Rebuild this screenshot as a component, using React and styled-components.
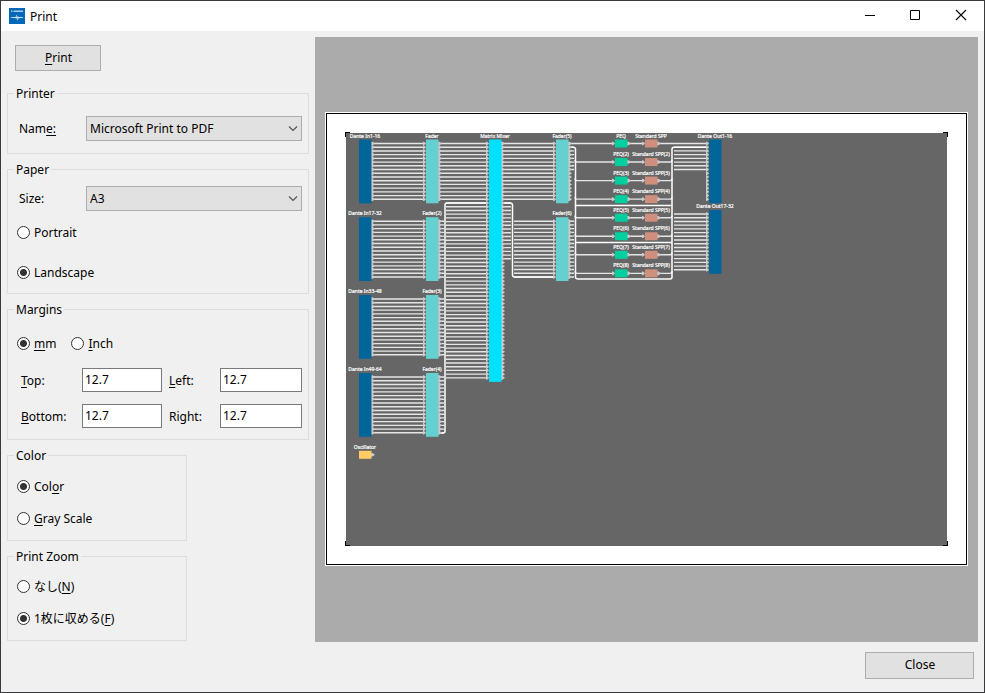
import React from "react";
import styled, { createGlobalStyle } from "styled-components";

const GlobalStyle = createGlobalStyle`
  * {
    box-sizing: border-box;
  }

  body {
    margin: 0;
    background: #f0f0f0;
  }

  body, button, input, select {
    font-family: "Noto Sans", "Noto Sans CJK JP", sans-serif;
    font-size: 12px;
    line-height: 17px;
    color: #000000;
  }
`;

const Window = styled.div`
  min-height: 100vh;
  display: flex;
  flex-flow: column nowrap;
  border: 1px solid #3a393b;
  background: #f0f0f0;
`;
const TitleBar = styled.header`
  height: 30px;
  padding-left: 8px;
  display: flex;
  align-items: center;
  background: #ffffff;
`;
const Title = styled.h1`
  flex: 1;
  margin: 0 0 0 5px;
  font-size: 12px;
  font-weight: 400;
`;
const WindowButton = styled.button`
  width: 46px;
  height: 30px;
  padding: 0 0 2px;
  display: flex;
  align-items: center;
  justify-content: center;
  border: none;
  background: transparent;
`;
const Body = styled.main`
  flex: 1;
  padding: 6px 6px 0;
  display: grid;
  grid-template-columns: 302px 1fr;
  column-gap: 6px;
`;
const Settings = styled.form`
  display: flex;
  flex-flow: column nowrap;
  align-items: flex-start;
  gap: 7px;
`;
const Button = styled.button`
  width: ${(props) => props.$width};
  height: ${(props) => props.$height};
  padding: 0 0 2px 1px;
  border: 1px solid #adadad;
  background: #e1e1e1;
`;
const PrintArea = styled.div`
  padding: 8px 8px 7px;
`;
const Group = styled.fieldset`
  width: ${(props) => props.$width || "100%"};
  min-width: 0;
  margin: 0;
  padding: ${(props) => props.$top} 6px ${(props) => props.$bottom};
  border: 1px solid #dcdcdc;
`;
const Legend = styled.legend`
  height: 17px;
  padding: 0 2px;
`;
const Field = styled.div`
  display: grid;
  grid-template-columns: 72px 1fr;
  align-items: center;
`;
const FieldLabel = styled.label`
  padding-left: 5px;
`;
const SelectBox = styled.div`
  position: relative;

  svg {
    position: absolute;
    top: 9px;
    right: 4px;
    pointer-events: none;
  }
`;
const Select = styled.select`
  width: 100%;
  height: 25px;
  padding: 0 20px 0 3px;
  display: block;
  appearance: none;
  border: 1px solid #adadad;
  border-radius: 0;
  background: #e1e1e1;
`;
const Options = styled.div`
  padding: ${(props) => props.$top || "0"} 3px 0;
  display: flex;
  flex-flow: ${(props) => (props.$row ? "row" : "column")} nowrap;
  gap: ${(props) => props.$gap};
`;
const OptionLabel = styled.label`
  height: 20px;
  display: flex;
  align-items: center;
  gap: 4px;
`;
const RadioInput = styled.input`
  width: 13px;
  height: 13px;
  margin: 0;
  appearance: none;
  border: 1px solid #333333;
  border-radius: 50%;
  background: #ffffff;

  &:checked {
    background: radial-gradient(circle, #333333 3px, #ffffff 4px);
  }
`;
const MarginGrid = styled.div`
  margin-top: 15px;
  display: grid;
  grid-template-columns: 68px 80px 58px 1fr;
  row-gap: 12px;
  align-items: center;
`;
const MarginLabel = styled.label`
  padding-left: 7px;
`;
const TextInput = styled.input`
  width: 100%;
  height: 24px;
  padding: 0 2px 1px;
  border: 1px solid #7a7a7a;
  background: #ffffff;
`;
const Key = styled.span`
  text-decoration: underline;
  text-decoration-thickness: 1px;
  text-underline-offset: 2px;
`;
const Preview = styled.section`
  padding: 0 10px;
  display: flex;
  align-items: center;
  background: #ababab;
`;
const Paper = styled.div`
  width: 100%;
  padding: 18px;
  border: 1px solid #000000;
  outline: 1px solid #ffffff;
  margin: 0 1px 1px;
  background: #ffffff;
`;
const Diagram = styled.svg`
  width: 100%;
  display: block;
`;
const Caption = styled.text`
  font-family: "Noto Sans", sans-serif;
  font-size: 5px;
  fill: #ffffff;
  stroke: #ffffff;
  stroke-width: 0.2px;
  text-anchor: middle;
`;
const Footer = styled.footer`
  padding: 10px 10px 13px;
  display: flex;
  justify-content: flex-end;
`;

const PITCH = 3.72;

const columns = {
  input: 359,
  fader: 426,
  mixer: 489,
  fader2: 556,
  peq: 615,
  spp: 645,
  output: 709,
};

const blocks = [
  { label: "Dante In1-16", x: columns.input, y: 139.5, outs: 16, color: "#006699" },
  { label: "Dante In17-32", x: columns.input, y: 217.2, outs: 16, color: "#006699" },
  { label: "Dante In33-48", x: columns.input, y: 295, outs: 16, color: "#006699" },
  { label: "Dante In49-64", x: columns.input, y: 373, outs: 16, color: "#006699" },
  { label: "Fader", x: columns.fader, y: 139.5, ins: 16, outs: 16, color: "#66cfcf" },
  { label: "Fader(2)", x: columns.fader, y: 217.2, ins: 16, outs: 16, color: "#66cfcf" },
  { label: "Fader(3)", x: columns.fader, y: 295, ins: 16, outs: 16, color: "#66cfcf" },
  { label: "Fader(4)", x: columns.fader, y: 373, ins: 16, outs: 16, color: "#66cfcf" },
  { label: "Matrix Mixer", x: columns.mixer, y: 139.5, ins: 64, outs: 64, color: "#00e1ff" },
  { label: "Fader(5)", x: columns.fader2, y: 139.5, ins: 16, outs: 16, color: "#66cfcf" },
  { label: "Fader(6)", x: columns.fader2, y: 217.2, ins: 16, outs: 16, color: "#66cfcf" },
  { label: "Dante Out1-16", x: columns.output, y: 139.5, ins: 16, color: "#006699" },
  { label: "Dante Out17-32", x: columns.output, y: 210, ins: 16, color: "#006699" },
  { label: "Oscillator", x: columns.input, y: 450.8, outs: 1, color: "#ffcc66" },
];

for (let i = 0; i < 8; i++) {
  const suffix = i ? `(${i + 1})` : "";
  const y = 139.5 + i * 18.55;
  blocks.push({ label: `PEQ${suffix}`, x: columns.peq, y, ins: 1, outs: 1, color: "#00cf9f" });
  blocks.push({ label: `Standard SPP${suffix}`, x: columns.spp, y, ins: 1, outs: 1, color: "#cf8f7f" });
}

const portY = (y, i) => y + 4 + i * PITCH;

// horizontal runs of wires between two columns
const runs = [
  [373, 424, 139.5, 16],
  [373, 424, 217.2, 16],
  [373, 424, 295, 16],
  [373, 424, 373, 16],
  [440, 487, 139.5, 16],
  [440, 444, 217.2, 16],
  [440, 444, 295, 16],
  [440, 444, 373, 16],
  [446, 487, 199, 48],
  [503, 554, 139.5, 16],
  [503, 511, 199, 16],
  [514, 554, 217.2, 16],
  [570, 613, 139.5, 1],
  [570, 574, 143.2, 7],
  [570, 574, 217.2, 16],
  [660, 707, 139.5, 1],
  [674, 707, 143.2, 7],
  [674, 707, 210, 16],
];

const wires = runs.flatMap(([from, to, y, count]) =>
  Array.from({ length: count }, (_, i) => `M${from} ${portY(y, i)}H${to}`)
);

for (let i = 0; i < 8; i++) {
  const y = 143.5 + i * 18.55;
  wires.push(`M629 ${y}H643`);
  if (i) {
    wires.push(`M575 ${y - 2}Q575 ${y} 577 ${y}H613M660 ${y}H670Q672 ${y} 672 ${y - 2}`);
  }
}

const trunks = [
  "M487 203H447Q445 203 445 205V431Q445 433 443 433H440",
  "M503 203H510Q512.5 203 512.5 205V275Q512.5 277 515 277H554",
  "M570 147.2H573Q575.5 147.2 575.5 149V277Q575.5 279 578 279H670Q672 279 672 277V149Q672 147.2 674 147.2H707",
  "M576 205.5H672",
  "M576 242.5H672",
];

const Block = ({ label, x, y, ins = 0, outs = 0, color }) => {
  const ports = Math.max(ins, outs);
  const height = ports === 1 ? 8 : (ports - 1) * PITCH + 8;
  const arrows = [];
  for (let i = 0; i < ins; i++) {
    arrows.push(`M${x - 3} ${portY(y, i) - 1.8}h1l2.2 1.8l-2.2 1.8h-1z`);
  }
  for (let i = 0; i < outs; i++) {
    arrows.push(`M${x + 12} ${portY(y, i) - 1.8}h1.6l2.4 1.8l-2.4 1.8h-1.6z`);
  }
  return (
    <g>
      <path d={arrows.join("")} fill="#cccccc" />
      <rect x={x} y={y} width="12.5" height={height} fill={color} />
      <Caption x={x + 6} y={y - 2}>
        {label}
      </Caption>
    </g>
  );
};

const AppIcon = () => (
  <svg width="16" height="16" viewBox="0 0 16 16" aria-hidden="true">
    <rect width="16" height="16" fill="#0068b7" />
    <path d="M2 2.5h1.5v1.5h-1.5zM4.5 2.5h9.5v1.5h-9.5z" fill="#a9cdea" />
    <path d="M2 9.5L6.5 9L7.5 6.5L8.5 8.5L14 9.5L9.5 10.5L8.5 13L7.5 10.5Z" fill="#8fc0e6" />
    <path d="M2 9.5H14" stroke="#d5e8f7" strokeWidth="0.8" />
  </svg>
);

const Dropdown = ({ id, value }) => (
  <SelectBox>
    <Select id={id} defaultValue={value}>
      <option>{value}</option>
    </Select>
    <svg width="10" height="7" viewBox="0 0 10 7" aria-hidden="true">
      <path d="M1 1.5L5 5.5L9 1.5" fill="none" stroke="#555555" strokeWidth="1.2" />
    </svg>
  </SelectBox>
);

const Radio = ({ name, checked, children }) => (
  <OptionLabel>
    <RadioInput type="radio" name={name} defaultChecked={checked} />
    <span>{children}</span>
  </OptionLabel>
);

const App = () => {
  return (
    <Window>
      <GlobalStyle />
      <TitleBar>
        <AppIcon />
        <Title>Print</Title>
        <WindowButton aria-label="Minimize">
          <svg width="12" height="12" viewBox="0 0 12 12">
            <path d="M2 6.5H12" stroke="#000000" />
          </svg>
        </WindowButton>
        <WindowButton aria-label="Maximize">
          <svg width="12" height="12" viewBox="0 0 12 12">
            <path d="M1.5 1.5H10.5V10.5H1.5Z" fill="none" stroke="#000000" />
          </svg>
        </WindowButton>
        <WindowButton aria-label="Close window">
          <svg width="12" height="12" viewBox="0 0 12 12">
            <path d="M1 1L11 11M11 1L1 11" stroke="#000000" strokeWidth="1.1" />
          </svg>
        </WindowButton>
      </TitleBar>
      <Body>
        <Settings>
          <PrintArea>
            <Button type="button" $width="86px" $height="26px">
              <Key>P</Key>rint
            </Button>
          </PrintArea>
          <Group $top="14px" $bottom="12px">
            <Legend>Printer</Legend>
            <Field>
              <FieldLabel htmlFor="printer">
                Nam<Key>e:</Key>
              </FieldLabel>
              <Dropdown id="printer" value="Microsoft Print to PDF" />
            </Field>
          </Group>
          <Group $top="8px" $bottom="11px">
            <Legend>Paper</Legend>
            <Field>
              <FieldLabel htmlFor="size">Size:</FieldLabel>
              <Dropdown id="size" value="A3" />
            </Field>
            <Options $top="11px" $gap="20px">
              <Radio name="orientation">Portrait</Radio>
              <Radio name="orientation" checked>
                Landscape
              </Radio>
            </Options>
          </Group>
          <Group $top="15px" $bottom="11px">
            <Legend>Margins</Legend>
            <Options $row $gap="15px">
              <Radio name="unit" checked>
                <Key>m</Key>m
              </Radio>
              <Radio name="unit">
                <Key>I</Key>nch
              </Radio>
            </Options>
            <MarginGrid>
              <MarginLabel htmlFor="top">
                <Key>T</Key>op:
              </MarginLabel>
              <TextInput id="top" defaultValue="12.7" />
              <MarginLabel htmlFor="left">
                <Key>L</Key>eft:
              </MarginLabel>
              <TextInput id="left" defaultValue="12.7" />
              <MarginLabel htmlFor="bottom">
                <Key>B</Key>ottom:
              </MarginLabel>
              <TextInput id="bottom" defaultValue="12.7" />
              <MarginLabel htmlFor="right">Right:</MarginLabel>
              <TextInput id="right" defaultValue="12.7" />
            </MarginGrid>
          </Group>
          <Group $width="180px" $top="12px" $bottom="12px">
            <Legend>Color</Legend>
            <Options $gap="12px">
              <Radio name="color" checked>
                Col<Key>o</Key>r
              </Radio>
              <Radio name="color">
                <Key>G</Key>ray Scale
              </Radio>
            </Options>
          </Group>
          <Group $width="180px" $top="11px" $bottom="12px">
            <Legend>Print Zoom</Legend>
            <Options $gap="12px">
              <Radio name="zoom">
                なし(<Key>N</Key>)
              </Radio>
              <Radio name="zoom" checked>
                1枚に収める(<Key>F</Key>)
              </Radio>
            </Options>
          </Group>
        </Settings>
        <Preview aria-label="Preview">
          <Paper>
            <Diagram viewBox="345 132 603 414">
              <path
                d="M345 132h5v5h-5zM943 132h5v5h-5zM345 541h5v5h-5zM943 541h5v5h-5z"
                fill="#000000"
              />
              <rect x="346" y="133" width="601" height="412" fill="#666666" />
              <rect x="350" y="545" width="593" height="1" fill="#666666" />
              <path d={wires.join("")} fill="none" stroke="#e6e6e6" strokeWidth="1.4" />
              <path d={trunks.join("")} fill="none" stroke="#ffffff" strokeWidth="1.5" />
              {blocks.map((block) => (
                <Block key={block.label} {...block} />
              ))}
            </Diagram>
          </Paper>
        </Preview>
      </Body>
      <Footer>
        <Button type="button" $width="109px" $height="27px">
          Close
        </Button>
      </Footer>
    </Window>
  );
};

export default App;
